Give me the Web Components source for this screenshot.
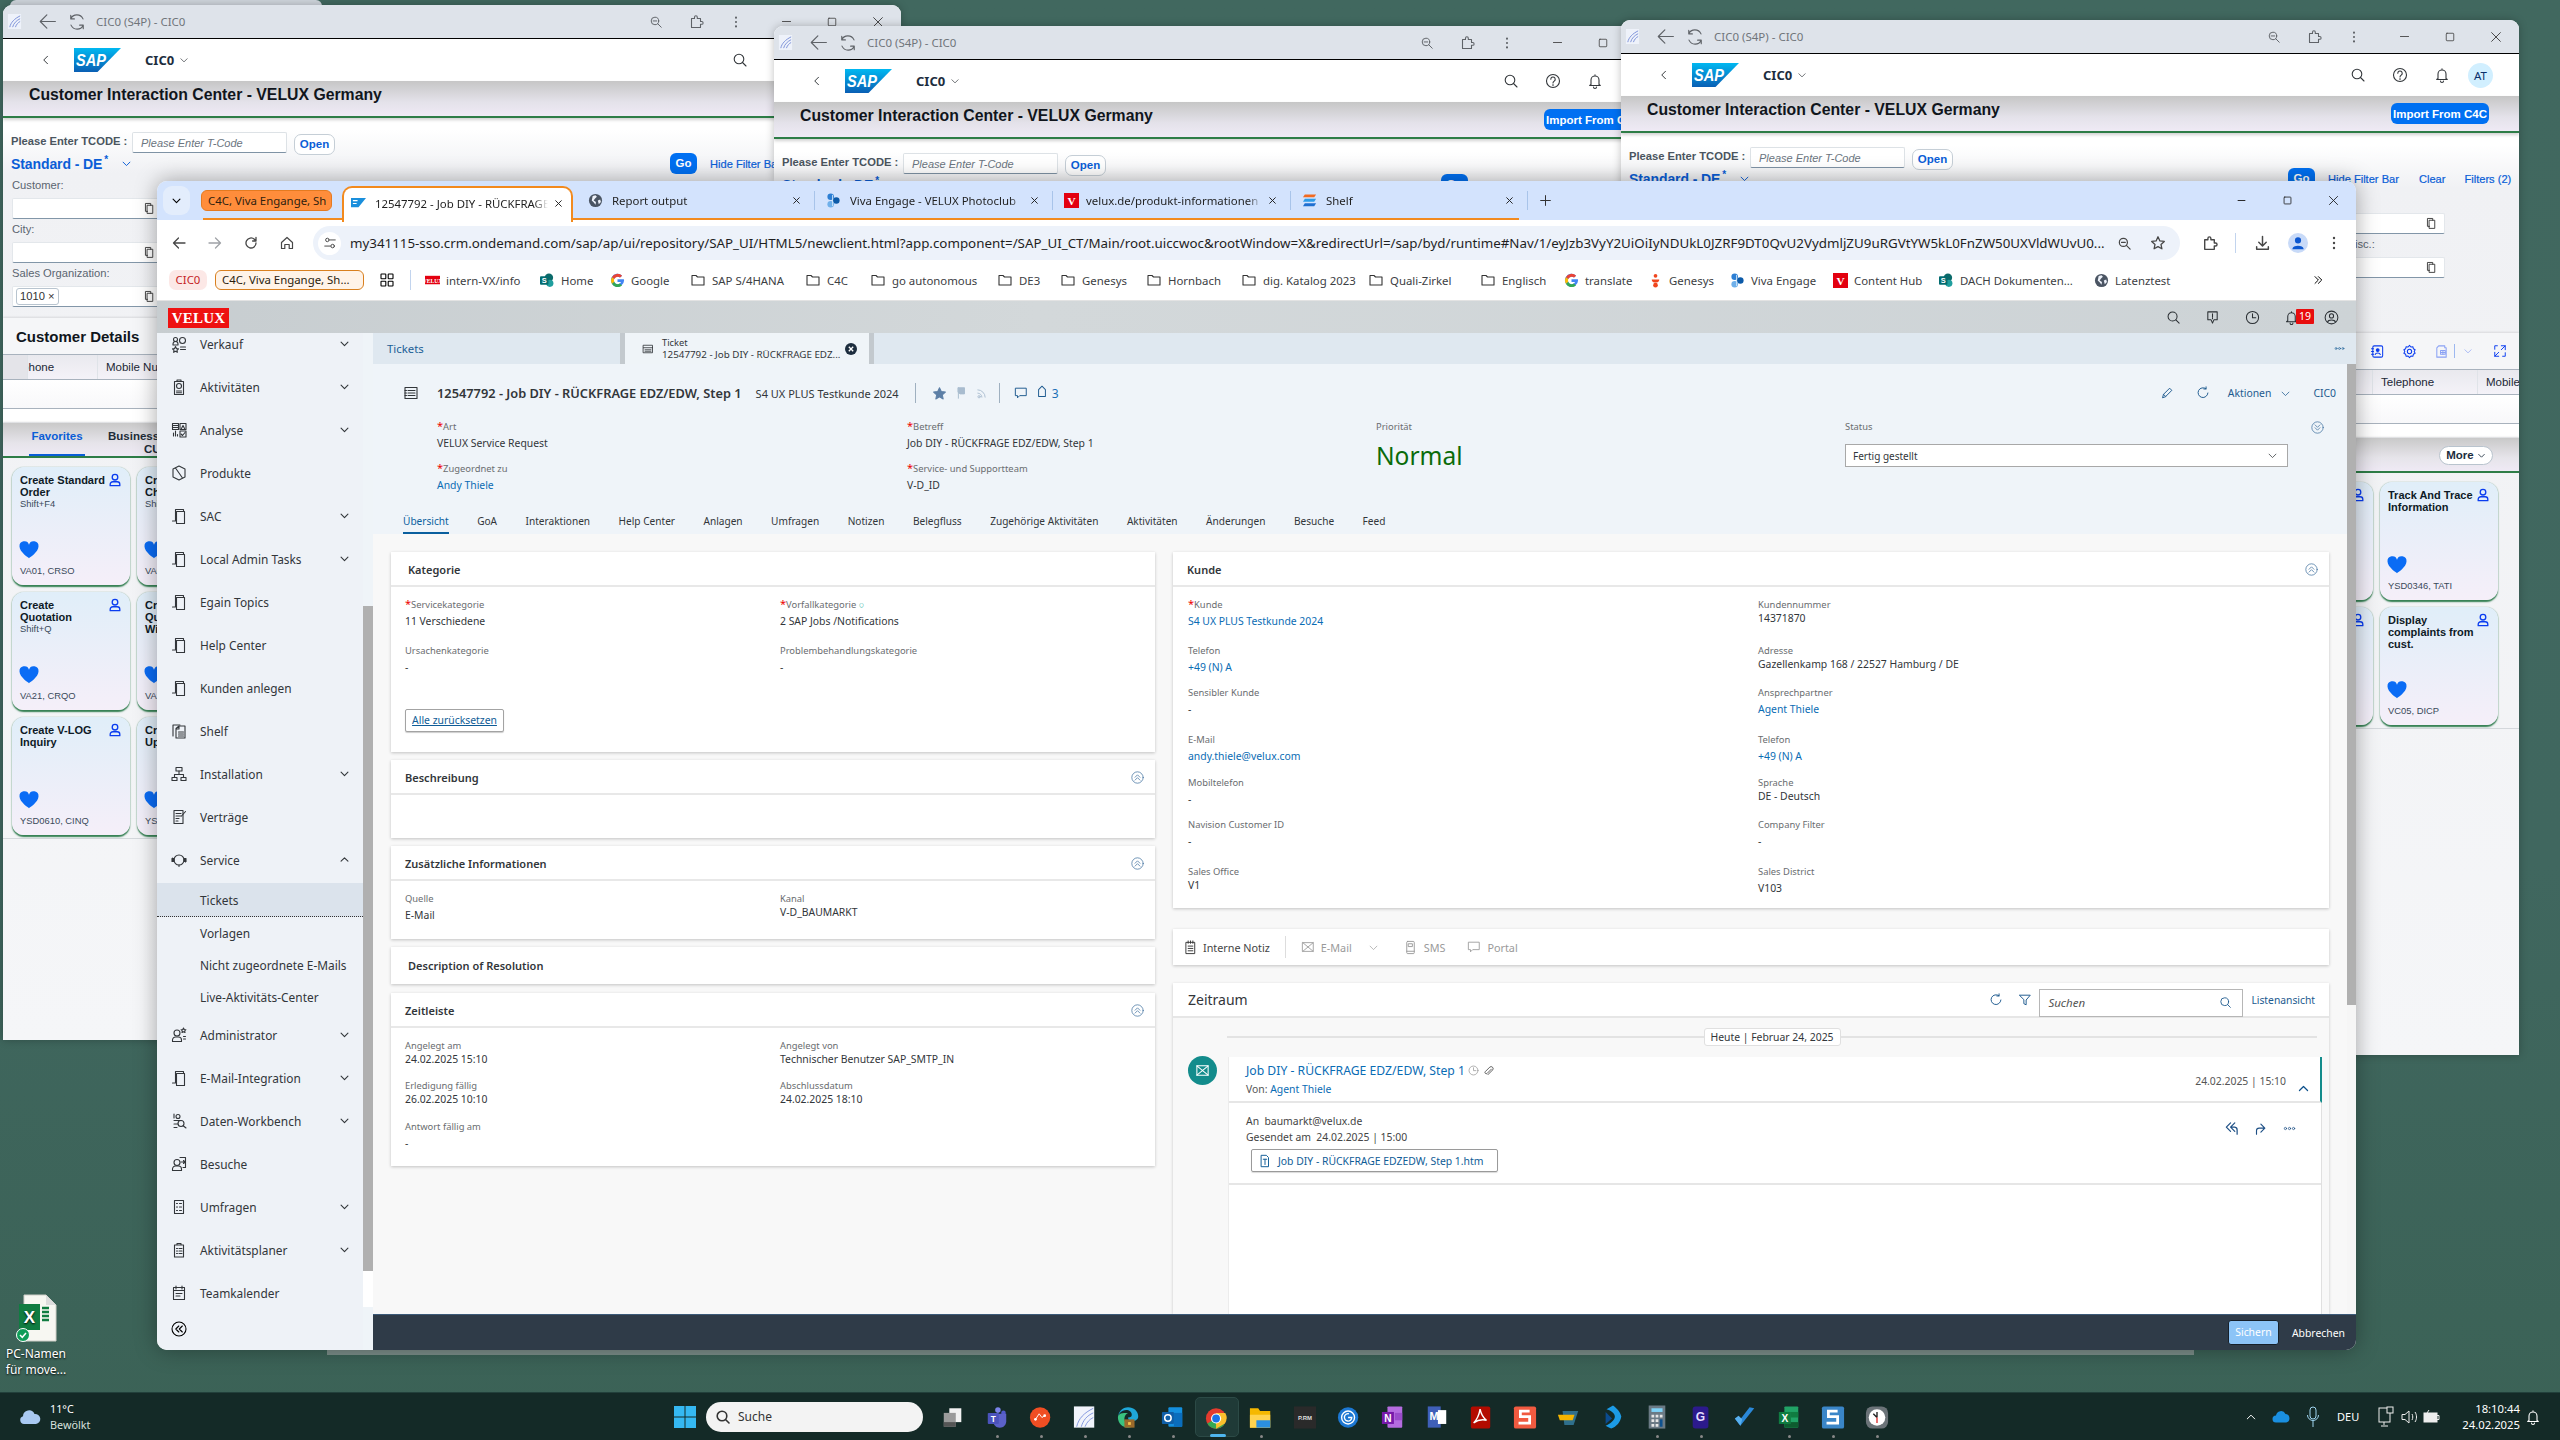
<!DOCTYPE html>
<html lang="de"><head><meta charset="utf-8"><title>CIC0</title>
<style>
html,body{margin:0;padding:0}
body{width:2560px;height:1440px;overflow:hidden;position:relative;background:linear-gradient(180deg,#41685f 0,#40675f 60%,#3b6256 100%);font-family:"Noto Sans",sans-serif}
</style></head><body>
<bg-strip></bg-strip>
<bg-window style="--x:3px;--y:5px" data-tx="-36px" data-k="a"></bg-window>
<bg-window style="--x:774px;--y:26px" data-tx="-36px" data-k="b"></bg-window>
<bg-window style="--x:1621px;--y:20px" data-tx="726px" data-k="c"></bg-window>
<desk-icon></desk-icon>
<under-scroll></under-scroll>
<main-window></main-window>
<task-bar></task-bar>
<script>
const I={
back:'<path d="M14 8H2.5M7.5 3 2.5 8l5 5"/>',
fwd:'<path d="M2 8h11.5M8.5 3l5 5-5 5"/>',
reload:'<path d="M13 8a5 5 0 1 1-1.6-3.7L13 6V2.4M13 6H9.6"/>',
cycle:'<path d="M12.8 5.5A5.4 5.4 0 0 0 3 5.4M3.2 10.5a5.4 5.4 0 0 0 9.8.1M3 2.6v2.9h2.9M13 13.4v-2.9h-2.9"/>',
refr:'<path d="M11.5 3.2A5.6 5.6 0 1 0 13.6 8M11.5 1v2.4H9"/>',
home:'<path d="M2.5 7.5 8 2.5l5.5 5v6h-3.3V9.5H5.8v4H2.5z"/>',
zoom:'<circle cx="6.8" cy="6.8" r="4.3"/><path d="M10 10l4 4M4.8 6.8h4"/>',
search:'<circle cx="7" cy="7" r="4.8"/><path d="M10.5 10.5 14 14"/>',
ext:'<path d="M3.5 4.5h3V3.2a1.4 1.4 0 0 1 2.8 0v1.3h3.2v3h1.2a1.4 1.4 0 0 1 0 2.8h-1.2v3.2h-9z"/>',
dots:'<circle cx="8" cy="3" r="1.2" fill="currentColor" stroke="none"/><circle cx="8" cy="8" r="1.2" fill="currentColor" stroke="none"/><circle cx="8" cy="13" r="1.2" fill="currentColor" stroke="none"/>',
hdots:'<circle cx="3" cy="8" r="1.4"/><circle cx="8" cy="8" r="1.4"/><circle cx="13" cy="8" r="1.4"/>',
min:'<path d="M3 8h10"/>',max:'<rect x="3" y="3" width="10" height="10" rx="1"/>',
x:'<path d="M3 3l10 10M13 3 3 13"/>',
chev:'<path d="M3 6l5 5 5-5"/>',up:'<path d="M3 10.5l5-5 5 5"/>',left:'<path d="M10 3 5 8l5 5"/>',
help:'<circle cx="8" cy="8" r="6.5"/><path d="M5.8 6.2a2.2 2.2 0 1 1 3.4 1.9c-.8.5-1.2 1-1.2 1.9M8 11.6v1"/>',
bell:'<path d="M4 11.5V7a4 4 0 0 1 8 0v4.500l1.300 1H2.700zM6.500 14a1.500 1.500 0 0 0 3 0M8 3V1.800"/>',
vh:'<rect x="5.500" y="4" width="6.500" height="10"/><path d="M5.500 11.500H3V1.800h6.500V4"/>',
book:'<rect x="3" y="2" width="10.500" height="12" rx="1.500"/><circle cx="8.200" cy="6.500" r="1.500" fill="currentColor"/><path d="M5.500 11.200c.7-2 4.800-2 5.500 0M1.600 5h2.200M1.600 8h2.200M1.600 11h2.200"/>',
gear:'<path d="M8 1.500l1.500 1.700 2.200-.3.4 2.200 1.900 1.100L13 8l1 1.800-1.900 1.100-.4 2.200-2.200-.3L8 14.500l-1.500-1.700-2.200.3-.4-2.200L2 9.800 3 8 2 6.200l1.900-1.100.4-2.200 2.200.3z"/><circle cx="8" cy="8" r="2.300"/>',
exportx:'<path d="M5 2h6.500v2H13v10H3V4.200z"/><rect x="7" y="7" width="5" height="4"/><path d="M9.500 7v4M7 9h5"/>',
full:'<path d="M9.500 2H14v4.500M14 2l-4.500 4.500M6.500 14H2V9.500M2 14l4.500-4.500M2 6V2h3M14 10v4h-3"/>',
person:'<circle cx="8" cy="4.800" r="3.200"/><path d="M2.500 14.500v-1.500a3 3 0 0 1 3-3h5a3 3 0 0 1 3 3v1.500z"/>',
heart:'<path fill="currentColor" stroke="none" d="M8 14.500S.4 9.600.4 5.200A3.900 3.900 0 0 1 8 3.700a3.900 3.900 0 0 1 7.600 1.500C15.600 9.600 8 14.500 8 14.500z"/>',
tune:'<circle cx="5" cy="4.500" r="2"/><circle cx="11" cy="11.500" r="2"/><path d="M8.500 4.500H14M2 11.500h6.500"/>',
star:'<path d="M8 1.800l1.900 4.100 4.400.5-3.300 3 .9 4.400L8 11.600l-3.900 2.200.9-4.400-3.300-3 4.400-.5z"/>',
starf:'<path fill="currentColor" d="M8 1.800l1.900 4.100 4.400.5-3.300 3 .9 4.400L8 11.600l-3.900 2.200.9-4.400-3.300-3 4.400-.5z"/>',
dl:'<path d="M8 1.500V10M4.500 6.800 8 10.300l3.500-3.500M2.500 11v2.500h11V11"/>',
grid:'<rect x="2" y="2" width="4.800" height="4.800" rx=".6"/><rect x="9.200" y="2" width="4.800" height="4.800" rx=".6"/><rect x="2" y="9.200" width="4.800" height="4.800" rx=".6"/><rect x="9.200" y="9.200" width="4.800" height="4.800" rx=".6"/>',
folder:'<path d="M2 3.500h4l1.500 1.500H14v8H2z"/>',
dbl:'<path d="M4 3.500l4.500 4.500L4 12.500M8.500 3.500 13 8l-4.500 4.500"/>',
feed:'<path d="M3 2h10v8.500H9.500L8 14l-1.500-3.500H3z"/><path d="M8 4v3.800M8 8.800v.6"/>',
clock:'<circle cx="8" cy="8" r="6.500"/><path d="M8 4v4.200h3.500"/>',
acc:'<circle cx="8" cy="8" r="6.800"/><circle cx="8" cy="6.300" r="2.200"/><path d="M3.800 12.800c.9-2.800 7.500-2.800 8.400 0"/>',
tick:'<rect x="2" y="3" width="12" height="10"/><path d="M2 6.300h12M4 9h8M4 11h8"/>',
tick2:'<rect x="2" y="2.500" width="12" height="11"/><path d="M5 5.500h7M5 8h7M5 10.500h7M2 5.500h1.500M2 8h1.500M2 10.500h1.500"/>',
flag:'<path fill="currentColor" d="M5 2h7v7H7L5 7.500z"/><path d="M5 2v12"/>',
rss:'<circle cx="5" cy="12" r="1.400"/><path d="M3.500 7.500a5 5 0 0 1 5 5M3.500 3.500a9 9 0 0 1 9 9"/>',
chat:'<path d="M2 2.500h12v8.500H6.500L4 13.500V11H2z"/>',
tag:'<path d="M2.500 8 8 2.500h5.500V8L8 13.500z" transform="rotate(-45 8 8)"/>',
pencil:'<path d="M3 13l1-3.500 7-7 2.500 2.500-7 7zM4 9.500 6.500 12"/>',
cd:'<circle cx="8" cy="8" r="7"/><path d="M5 4.800 8 7.800l3-3M5 8.300l3 3 3-3"/>',
cu:'<circle cx="8" cy="8" r="7"/><path d="M5 7.700l3-3 3 3M5 11.200l3-3 3 3"/>',
cl:'<circle cx="8" cy="8" r="7"/><path d="M7.800 5 4.800 8l3 3M11.300 5l-3 3 3 3"/>',
filter:'<path d="M2 2.500h12L9.300 8v5.500l-2.600-1.300V8z"/>',
mailx:'<rect x="2" y="3" width="12" height="10"/><path d="M2 3l12 10M14 3 2 13"/>',
sms:'<rect x="4" y="1.500" width="8" height="13" rx="1"/><path d="M6 4h4v3H6zM4 12h8"/>',
note:'<rect x="3.500" y="2.500" width="9" height="12"/><path d="M5.500 1v2.500M8 1v2.500M10.500 1v2.500M5.500 6.500h5M5.500 9h5M5.500 11.500h5"/>',
replyall:'<path d="M7 2 2.500 6.500 7 11M11.500 2 7 6.500l4.500 4.500M7 6.500h4.500A3 3 0 0 1 14 9.500V14"/>',
fwdm:'<path d="M9 2.500l4.500 4.500L9 11.500M13.500 7H7A3 3 0 0 0 4 10v4"/>',
clip:'<path d="M12.500 5.500 6.800 11.200a1.700 1.700 0 0 1-2.400-2.400l6-6a2.700 2.700 0 0 1 3.800 3.800l-6.300 6.300"/>',
doc:'<path d="M4 1.500h5.500L12 4v10.500H4zM6 6h4M8 6v6"/>',
nv1:'<circle cx="4.500" cy="3.500" r="2"/><path d="M2 9V8a2 2 0 0 1 5 0v1zM4.500 10.500l1 2.200 2 .2-1.500 1.400.4 2-1.900-1-1.900 1 .4-2L1.500 12.900l2-.2z"/><circle cx="11.500" cy="4.500" r="3"/><path d="M9.500 11h5M9.500 13.500h5"/>',
nv2:'<rect x="3.500" y="2.500" width="9" height="13"/><path d="M6 2.500V1h4v1.500"/><circle cx="8" cy="7" r="2.500"/><path d="M5.500 12h5M5.500 13.800h5"/>',
nv3:'<rect x="1.500" y="1.500" width="6" height="6"/><path d="M1.500 3.500h6M1.500 5.500h6"/><rect x="9" y="1.500" width="6" height="6"/><path d="M10 7.500 12 3.500l2 4"/><path d="M2.500 14v-3M4.500 14v-5M6.500 14v-1.500" /><rect x="9" y="9" width="6" height="6" /><path d="M10 12l1.500 1.500L14 10.500"/>',
nv4:'<path d="M8 1l6 3v8l-6 3-6-3V4zM4.500 3l7 10"/>',
nv5:'<path d="M1.500 13h3V1.500h8v2"/><rect x="5.500" y="3.500" width="8" height="12"/>',
shelf:'<path d="M2 13V2h7"/><path d="M5 5.500 8 3h6v12H5zM8 3v3H5M7.500 9h5M7.500 11h5M7.500 13h5"/>',
inst:'<rect x="5" y="1.500" width="6" height="3.500"/><rect x="1" y="11.500" width="5" height="3"/><rect x="10" y="11.500" width="5" height="3"/><path d="M8 5v3.500M3.500 11.500v-3h9v3"/>',
vert:'<path d="M3 1.500h9v13H3zM5 4.500h5M5 7h5M5 9.500h3M5 12h2"/><path d="M14.500 2.500 10.500 7"/>',
serv:'<circle cx="8" cy="8" r="5"/><path d="M3 8H1.500v-2M13 8h1.500v2M8 13v1.500"/><rect x="1" y="6.500" width="2" height="3" fill="currentColor"/><rect x="13" y="6.500" width="2" height="3" fill="currentColor"/>',
admin:'<circle cx="6" cy="6" r="3"/><path d="M1.500 14.500V13a3 3 0 0 1 3-3h3a3 3 0 0 1 3 3v1.500zM12.500 1l.7 1.500 1.700.2-1.200 1.100.3 1.700-1.500-.8-1.500.8.300-1.700-1.200-1.100 1.700-.2zM12.500 9.500h2M12.500 12h2"/>',
data:'<circle cx="7" cy="3.500" r="2"/><path d="M3 1v4M3 7.500h7M3 11h4M3 14.500h3"/><circle cx="10" cy="10.500" r="3"/><path d="M12.200 12.700 15 15"/>',
vis:'<circle cx="6" cy="6.500" r="3"/><path d="M1.500 14.500v-1.500a3 3 0 0 1 3-3h3a3 3 0 0 1 3 3v1.500zM9 1.500h5.500v10H12M10 6h4M12.500 4.500 14 6l-1.500 1.500"/>',
survey:'<rect x="3.500" y="1.500" width="9" height="13"/><path d="M5.500 4.500h1M5.500 8h1M5.500 11.500h1M8.500 4.500h2M8.500 8h2M8.500 11.500h2"/>',
plan:'<path d="M3.500 3h9v12h-9zM6 3V1.500h4V3M5.500 6.500h1M8 6.500h3M5.500 9h1M8 9h3M5.500 11.500h1M8 11.500h3"/>',
cal:'<path d="M2.500 2.500h11v12h-11zM2.500 5.500h11M5 1v3M11 1v3M5 8.500h6M5 11h4"/>',
};
function el(name,css,html){customElements.define(name,class extends HTMLElement{connectedCallback(){if(this.shadowRoot)return;const r=this.attachShadow({mode:'open'});r.innerHTML='<style>'+css+'</style>'+(typeof html==='function'?html(this):html)}})}
const a=(e,k,d='')=>e.getAttribute(k)??d;
el('x-i',':host{display:inline-flex;flex:none;align-items:center;justify-content:center;line-height:0}svg{fill:none;stroke:currentColor;stroke-width:var(--sw,1.100);stroke-linejoin:round;stroke-linecap:round;overflow:visible}',
e=>{const s=a(e,'s','16');return `<svg width="${s}" height="${s}" viewBox="0 0 16 16">${I[a(e,'n')]||''}</svg>`});

/* ---------- logos and favicons ---------- */
el('sap-logo',':host{display:inline-block;line-height:0}',e=>{const w=a(e,'w','47'),h=w*24/47;return `<svg width="${w}" height="${h}" viewBox="0 0 47 24"><defs><linearGradient id="g" x1="0" y1="0" x2="0" y2="1"><stop offset="0" stop-color="#00b8f1"/><stop offset="1" stop-color="#0a5fb4"/></linearGradient></defs><path d="M0 0h47L23.500 24H0z" fill="url(#g)"/><text x="2" y="18" font-family="Liberation Sans" font-weight="700" font-style="italic" font-size="17" fill="#fff" textLength="30" lengthAdjust="spacingAndGlyphs">SAP</text></svg>`});
el('fav-icon',':host{display:inline-flex;flex:none;line-height:0;align-items:center;justify-content:center}',e=>{const s=a(e,'s','15'),n=a(e,'n');const m={
fiori:'<rect x="1" y="0" width="14" height="16" fill="#eef2fa"/><path d="M14 2C8 5 4 9 3 14M14 5C10 7 7 10 6 14M14 8c-2 1-4 3-5 6" fill="none" stroke="#7a8fd8"/>',
sap:'<path d="M0 2h16l-8 10H0z" fill="#1a8fdc"/><path d="M2 5h5M2 8h4" stroke="#fff" stroke-width="1.300"/>',
viva:'<circle cx="5" cy="4" r="3.500" fill="#2d7fd4"/><circle cx="11" cy="8" r="3.500" fill="#0c5aa8"/><circle cx="5" cy="12" r="3.500" fill="#6fb0ea"/><path d="M7 2v12" stroke="#cfe4f8"/>',
velux:'<rect width="16" height="16" fill="#e3000f"/><text x="8" y="12.500" text-anchor="middle" font-family="Liberation Serif" font-weight="700" font-size="12" fill="#fff">V</text>',
shelf:'<path d="M3 1.500h12l-2 3H1z" fill="#f26a21"/><path d="M3 6.200h12l-2 3H1z" fill="#2d9ce8"/><path d="M3 11h12l-2 3H1z" fill="#1f6fd0"/>',
vxred:'<rect y="3" width="16" height="9" fill="#e3000f"/><text x="8" y="10.200" text-anchor="middle" font-family="Liberation Serif" font-weight="700" font-size="6" fill="#fff">VELUX</text>',
sp:'<circle cx="9.500" cy="5" r="4.500" fill="#0b6a6a"/><circle cx="10.500" cy="11" r="3.800" fill="#1f9e9e"/><rect x="0" y="3.500" width="9" height="9" rx="1" fill="#036c70"/><text x="4.500" y="11" text-anchor="middle" font-family="Liberation Sans" font-weight="700" font-size="8" fill="#fff">S</text>',
g:'<path d="M14.700 6.700H8v2.900h3.800A4 4 0 1 1 10.700 4.900l2.200-2.100A7 7 0 1 0 15 8c0-.5 0-.9-.3-1.300z" fill="#4285f4"/><path d="M2 4.600l2.500 1.900A4 4 0 0 1 10.700 4.900l2.200-2.100A7 7 0 0 0 2 4.600z" fill="#ea4335"/><path d="M2 11.400A7 7 0 0 0 12.800 13.200l-2.400-1.900a4 4 0 0 1-5.900-2z" fill="#34a853"/><path d="M1.100 8c0 1.300.3 2.400.9 3.400l2.500-2.100a4 4 0 0 1 0-2.800L2 4.600A7 7 0 0 0 1.100 8z" fill="#fbbc05"/>',
gen:'<circle cx="8" cy="3" r="2" fill="#f0461e"/><path d="M4 7h8a3 3 0 0 1-3 3H7a3 3 0 0 1-3-3z" fill="#f0461e"/><circle cx="8" cy="13" r="2.500" fill="#f0461e"/>',
globe:'<circle cx="8" cy="8" r="7" fill="#4b5563"/><path fill="#eef2fa" d="M5 3.200l3-.8 1.500 1.600-2 1.800L6 8l2.500 1.500-.5 3-1.800-2.500L4 8zM10.500 8l2.500-1 .8 2.500-2.300 2.500z"/>'};
return `<svg width="${s}" height="${s}" viewBox="0 0 16 16">${m[n]||''}</svg>`});

/* ---------- background windows ---------- */
el('bg-strip',':host{position:absolute;left:10px;top:0;width:312px;height:6px;background:#cfd5dc;border-radius:6px 6px 0 0}','');
el('under-scroll',':host{position:absolute;left:327px;top:1345px;width:1867px;height:10px;background:#7c8f8a}','');
el('win-title',`:host{display:flex;align-items:center;height:33px;background:#dee3ea;border-bottom:1px solid #000;color:#5f6368;font-size:12px}
.b{width:40px;display:flex;justify-content:center}.w{width:46px;display:flex;justify-content:center;color:#444}
.t{font:11.500px "Noto Sans";color:#70757a;margin-left:9px;white-space:nowrap}`,
`<fav-icon n="fiori" s="15" style="margin-left:4px"></fav-icon>
<x-i n="back" s="21" style="margin-left:15px;--sw:.9"></x-i><x-i n="cycle" s="20" style="margin-left:9px;--sw:.9"></x-i><span class="t">CIC0 (S4P) - CIC0</span>
<span class="b" style="margin-left:auto"><x-i n="zoom" s="14"></x-i></span><span class="b"><x-i n="ext" s="16"></x-i></span><span class="b"><x-i n="dots" s="14"></x-i></span>
<span class="w" style="margin-left:7px"><x-i n="min" s="13"></x-i></span><span class="w"><x-i n="max" s="12"></x-i></span><span class="w"><x-i n="x" s="14"></x-i></span>`);
el('shell-head',`:host{display:flex;align-items:center;height:42px;background:#fff;color:#32363a;box-sizing:border-box}
b{font:700 13px "Noto Sans";color:#1d2d3e;margin-left:24px}
.ic{display:flex;width:42px;justify-content:center}
.av{width:25px;height:25px;border-radius:50%;background:#d1efff;color:#0a2f6b;font:11.500px "Noto Sans";display:flex;align-items:center;justify-content:center;margin:0 26px 0 5px}`,
`<x-i n="left" s="12" style="margin-left:37px;--sw:1.300"></x-i><sap-logo w="47" style="margin-left:22px"></sap-logo><b>CIC0</b><x-i n="chev" s="10" style="margin-left:5px"></x-i>
<span class="ic" style="margin-left:auto"><x-i n="search" s="16"></x-i></span><span class="ic"><x-i n="help" s="16"></x-i></span><span class="ic"><x-i n="bell" s="16"></x-i></span><span class="av">AT</span>`);
el('page-bar',`:host{display:flex;align-items:flex-start;height:37px;box-sizing:border-box;border-bottom:2px solid #2e7d47;background:linear-gradient(180deg,#c6c6c6,#e4e2ea 60%,#efeaf5);box-shadow:0 2px 3px rgba(0,0,0,.18)}
h1{margin:3px 0 0 26px;font:700 15.800px/21px "Liberation Sans";color:#10151c;white-space:nowrap}
button{margin:7px 30px 0 auto;width:98px;height:21px;background:#0070f2;color:#fff;border:0;border-radius:6px;font:700 11.500px "Liberation Sans";padding:0}`,
e=>`<h1>Customer Interaction Center - VELUX Germany</h1>${a(e,'btn')?'<button>Import From C4C</button>':''}`);
el('tile-card',`:host{display:block;position:relative;box-sizing:border-box;width:118px;height:118px;border-radius:12px;background:linear-gradient(180deg,#e0eef9,#f5eff9);box-shadow:0 0 1px #7fa38f,0 1.500px 1.500px #2f7d4e;padding:7px 8px;font-family:"Liberation Sans"}
.t{font:700 11px/12px "Liberation Sans";color:#0e1a26;padding-right:15px}
.s{font:9.400px/11px "Liberation Sans";color:#3a4a5a}
.p{position:absolute;right:8px;top:6px;color:#0a3cf0;--sw:1.500}
.h{position:absolute;left:7px;top:73px;color:#0a6cf5}
.c{position:absolute;left:8px;top:98px;font:9.400px/12px "Liberation Sans";color:#3a4a5a;white-space:nowrap}`,
e=>a(e,'t')?`<x-i class="p" n="person" s="14"></x-i><div class="t">${a(e,'t')}</div><div class="s">${a(e,'s')}</div><x-i class="h" n="heart" s="20"></x-i><div class="c">${a(e,'c')}</div>`:(e.hasAttribute('ic')?`<x-i class="p" n="person" s="14"></x-i>`:''));
el('bg-field',`:host{display:block;height:44px;font:11.200px/16px "Liberation Sans";color:#5b6570}
.l{height:16px;white-space:nowrap}.i{margin-top:5px;height:21px;box-sizing:border-box;background:#fff;border:1px solid #e3e7eb;border-bottom:1px solid #8296a8;border-radius:2px;display:flex;align-items:center;justify-content:flex-end;padding:0 6px;color:#333;position:relative}
.k{margin-right:auto;margin-left:-3px;border:1px solid #b8c4cf;border-radius:3px;padding:0 3px;font-size:11.200px;line-height:15px}`,
e=>`<div class="l">${a(e,'l')}</div><div class="i">${a(e,'k')?`<span class="k">${a(e,'k')} ×</span>`:''}<x-i n="vh" s="13"></x-i></div>`);
el('bg-window',`:host{display:block;position:absolute;left:var(--x);top:var(--y);width:898px;height:1035px;background:linear-gradient(180deg,#fff 125px,#f0f1f4 168px,#f5f6f8);border-radius:9px 9px 0 0;overflow:hidden;box-shadow:0 0 8px rgba(0,0,0,.25);font-family:"Liberation Sans"}
:host([data-k=b]){height:155px}
.tc{display:flex;align-items:flex-start;margin-top:14px;height:21px;padding-left:8px;font:700 11.200px "Liberation Sans";color:#4a5560}
.tc .lab{width:121px;padding-top:3px;white-space:nowrap}
.tc .in{width:155px;height:21px;box-sizing:border-box;background:#fff;border:1px solid #dde2e6;border-bottom:1px solid #7f93a5;border-radius:2px;font:italic 400 11px/20px "Liberation Sans";color:#6b7580;padding-left:8px}
.tc .op{margin:2px 0 0 7px;width:41px;height:21px;box-sizing:border-box;background:#fff;border:1px solid #c5ced6;border-radius:7px;color:#0a5ed7;font:700 11.500px/19px "Liberation Sans";text-align:center}
.st{display:flex;align-items:center;height:21px;padding-left:8px;color:#0a5ed7;font-size:12px;position:relative}
.st b{font:700 14px "Liberation Sans";letter-spacing:-.1px}.st sup{font:700 10px/1 "Liberation Sans";margin:-8px 0 0 2px}
.go{margin-left:667px;position:absolute;left:0;width:27px;height:21px;border-radius:6px;background:#0070f2;color:#fff;text-align:center;font:700 11.500px/21px "Liberation Sans"}
.acts{margin-left:auto;display:flex;align-items:center;width:191px}
.ln{font:400 11.100px "Liberation Sans";-webkit-text-stroke:.2px #0a5ed7;white-space:nowrap;color:#0a5ed7}
.fg{display:grid;grid-template-columns:repeat(5,151px);column-gap:15px;padding:3px 0 0 9px}
.det{display:flex;align-items:center;height:36px;margin-top:9px;background:#f5f6f8;box-shadow:0 -1px 2px rgba(0,0,0,.1);color:#0a3cf0}
.det h2{margin:0 0 0 13px;font:700 15px "Liberation Sans";color:#10151c;white-space:nowrap}
.thead{height:26px;display:flex;background:linear-gradient(180deg,#e9e9ee,#f4f2f8);border-top:1px solid #a8b2bd;border-bottom:1px solid #a8b2bd;box-sizing:border-box}
.fz{width:25px;flex:none;background:#e4e4e9;border-right:1px solid #dfe3e8;box-sizing:border-box}.sc{flex:1;min-width:0;overflow:hidden;display:flex}
.thead .c{flex:none;width:105px;box-sizing:border-box;border-left:1px solid #dfe3e8;padding-left:8px;font:11.500px/24px "Liberation Sans";color:#1b2735;white-space:nowrap;overflow:hidden}
.row{height:28px;box-sizing:border-box;background:linear-gradient(180deg,#fff,#f8f8fa)}
.sb{height:13px;border-top:1px solid #a8b2bd;background:#fff;position:relative}
.tabs{display:flex;height:35px;box-sizing:border-box;margin-top:1px;background:linear-gradient(180deg,#c9c9c9,#e6e4ea 60%,#efeaf5);border-bottom:2px solid #2e7d47;position:relative;font:700 11.500px/13px "Liberation Sans";color:#222d38;box-shadow:0 -1px 2px rgba(0,0,0,.1)}
.tabs .f{margin:7px 0 0 26px;width:56px;text-align:center;color:#0a5ed7;height:26px;border-bottom:2px solid #0a5ed7;box-sizing:border-box}
.tabs .bc{margin:7px 0 0 23px;width:70px;white-space:nowrap}.bc span{margin-left:36px}
.more{margin:8px 26px 0 auto;width:54px;height:19px;box-sizing:border-box;background:#fff;border:1px solid #b9c4ce;border-radius:10px;font:700 11.500px/17px "Liberation Sans";color:#1d2d3e;display:flex;align-items:center;justify-content:center;gap:3px}
.tiles{display:grid;grid-template-columns:repeat(7,118px);gap:7px;padding:9px 0 0 9px}
.end{border-top:1px solid #d4d8dc;margin-top:3px}`,
e=>{const k=e.dataset.k;
const top=`<win-title></win-title><shell-head></shell-head><page-bar ${k!='a'?'btn="1"':''}></page-bar>
<div class="tc"><span class="lab">Please Enter TCODE :</span><span class="in">Please Enter T-Code</span><span class="op">Open</span></div>
<div class="st"><b>Standard - DE</b><sup>*</sup><x-i n="chev" s="11" style="margin-left:13px;--sw:1.400"></x-i>
 <span class="go">Go</span><div class="acts"><span class="ln">Hide Filter Bar</span>${k=='a'?'':'<span class="ln" style="margin-left:20px">Clear</span><span class="ln" style="margin:0 8px 0 19px">Filters (2)</span>'}</div></div>`;
if(k=='b')return top;
const F=(l,x='')=>`<bg-field l="${l}" ${x}></bg-field>`;
const heads=k=='a'?'<span class="c" style="margin-left:-36px">Telephone</span><span class="c">Mobile Number</span>':'<span class="c" style="margin-left:726px">Telephone</span><span class="c">Mobile Number</span>';
const tiles=k=='a'
?`<tile-card t="Create Standard Order" s="Shift+F4" c="VA01, CRSO"></tile-card><tile-card t="Create<br>Change Order" s="Shift+F5" c="VA02"></tile-card><tile-card t="Create<br>Quotation" s="Shift+Q" c="VA21, CRQO" style="grid-area:2/1"></tile-card><tile-card t="Create<br>Quotation<br>With Ref" c="VA23" style="grid-area:2/2"></tile-card><tile-card t="Create V-LOG Inquiry" c="YSD0610, CINQ" style="grid-area:3/1"></tile-card><tile-card t="Create<br>Update" c="YSD" style="grid-area:3/2"></tile-card>`
:`<tile-card ic style="grid-area:1/6"></tile-card><tile-card t="Track And Trace Information" c="YSD0346, TATI" style="grid-area:1/7"></tile-card><tile-card ic style="grid-area:2/6"></tile-card><tile-card t="Display complaints from cust." c="VC05, DICP" style="grid-area:2/7"></tile-card>`;
return top+`<div class="fg">${k=='a'?F('Customer:'):F('')}${F('')+F('')+F('')+F('')}${k=='a'?F('City:'):F('')}${F('')+F('')+F('')}${k=='c'?F('Customer Misc.:'):F('')}${k=='a'?F('Sales Organization:','k="1010"'):F('')}</div>
<div class="det">${k=='a'?'<h2>Customer Details</h2>':''}<x-i n="book" s="15" style="margin-left:auto"></x-i><x-i n="gear" s="15" style="margin-left:17px"></x-i><x-i n="exportx" s="15" style="margin-left:17px;opacity:.45"></x-i><span style="width:1px;height:14px;background:#9db8f0;margin-left:5px"></span><x-i n="chev" s="10" style="margin-left:8px;opacity:.45"></x-i><x-i n="full" s="14" style="margin:0 12px 0 20px"></x-i></div>
<div class="thead"><span class="fz"></span><div class="sc">${heads}</div></div>
<div class="row"></div><div class="sb"></div>
<div class="tabs">${k=='a'?'<span class="f">Favorites</span><span class="bc">Business<br><span>CU</span></span>':''}<span class="more">More <x-i n="chev" s="9" style="--sw:1.500"></x-i></span></div>
<div class="tiles">${tiles}</div><div class="end"></div>`});

/* ---------- desktop icon ---------- */
el('desk-icon',`:host{position:absolute;left:1px;top:1294px;width:70px;font:12px/16px "Noto Sans";color:#fff;text-shadow:0 1px 2px #000;text-align:center;display:block}`,
`<svg width="50" height="48" viewBox="0 0 50 48"><path d="M13 1h22l10 10v36H13z" fill="#f7f7f2" stroke="#cfcfc8"/><path d="M35 1v10h10" fill="#ddd"/><rect x="8" y="10" width="21" height="26" fill="#107c41"/><text x="18.500" y="29" text-anchor="middle" font-family="Liberation Sans" font-weight="700" font-size="17" fill="#fff">X</text><path d="M31 14h7M31 18h7M31 22h7M31 26h7" stroke="#107c41" stroke-width="2.500"/><circle cx="12" cy="41" r="6.500" fill="#0f9d58" stroke="#fff"/><path d="M9 41l2.300 2.300L15 39" stroke="#fff" fill="none" stroke-width="1.500"/></svg><br>PC-Namen für move...`);

/* ---------- browser chrome ---------- */
el('c-tab',`:host{display:flex;flex:none;align-items:center;height:39px;box-sizing:border-box;width:var(--w);padding-left:var(--pl,15px);position:relative;font:11.400px "Noto Sans";color:#1f1f1f}
.t{flex:1;min-width:0;margin-left:var(--g,9px);overflow:hidden;white-space:nowrap;-webkit-mask-image:linear-gradient(90deg,#000 calc(100% - 14px),transparent);padding-right:2px}
x-i{margin:0 14px 0 6px}.sep{position:absolute;right:0;top:10px;height:19px;width:1px;background:#a8c4ea}`,
e=>`<fav-icon n="${a(e,'ic')}" s="${a(e,'is','15')}"></fav-icon><span class="t">${a(e,'t')}</span><x-i n="x" s="9" style="--sw:1.700"></x-i><span class="sep"></span>`);
el('c-tabs',`:host{display:flex;height:39px;background:#d3e3fd;position:relative;flex:none}
.s{margin:5px 0 0 6px;width:27px;height:29px;border-radius:9px;background:#e3edfc;display:flex;align-items:center;justify-content:center}
.g{margin:9px 0 0 11px;width:131px;height:21px;box-sizing:border-box;background:#ff8d3b;border:1px solid #e57a20;border-radius:6px;font:11.400px/19px "Noto Sans";color:#30210f;padding-left:6px;overflow:hidden;white-space:nowrap}
.a{margin:5px 0 0 10px;width:231px;height:36px;box-sizing:border-box;background:#fff;border:2px solid #f28a1e;border-bottom:0;border-radius:10px 10px 0 0;display:flex;align-items:center;padding:0 8px 3px 7px;font:11.400px "Noto Sans";color:#1f1f1f;z-index:2}
.a .t{flex:1;min-width:0;margin-left:9px;overflow:hidden;white-space:nowrap;-webkit-mask-image:linear-gradient(90deg,#000 calc(100% - 14px),transparent)}
.l1,.l2{position:absolute;bottom:0;height:2px;background:#f28a1e}.l1{left:46px;width:140px}.l2{left:416px;width:946px}
.p{margin-left:12px;display:flex;align-items:center;color:#333}
.w{width:46px;display:flex;justify-content:center;align-items:center;color:#222}`,
`<span class="s"><x-i n="chev" s="11" style="--sw:1.600"></x-i></span><span class="g">C4C, Viva Engange, Sh</span>
<span class="a"><fav-icon n="sap" s="15"></fav-icon><span class="t">12547792 - Job DIY - RÜCKFRAGE</span><x-i n="x" s="9" style="margin-left:6px;--sw:1.700"></x-i></span>
<c-tab t="Report output" ic="globe" style="--w:242px;--pl:15px"></c-tab><c-tab t="Viva Engage - VELUX Photoclub" ic="viva" style="--w:238px;--pl:11px"></c-tab><c-tab t="velux.de/produkt-informationen" ic="velux" style="--w:238px;--pl:11px;--g:7px"></c-tab><c-tab t="Shelf" ic="shelf" style="--w:237px;--pl:11px"></c-tab>
<span class="p"><x-i n="x" s="11" style="transform:rotate(45deg);--sw:1.500"></x-i></span>
<span class="w" style="margin-left:auto"><x-i n="min" s="11" style="--sw:1.400"></x-i></span><span class="w"><x-i n="max" s="11" style="--sw:1.200"></x-i></span><span class="w"><x-i n="x" s="13"></x-i></span>
<span class="l1"></span><span class="l2"></span>`);
el('c-toolbar',`:host{display:flex;align-items:flex-start;height:40px;background:#fff;color:#474747;flex:none}
.n{width:36px;height:34px;margin-top:6px;display:flex;align-items:center;justify-content:center}
.addr{margin:6px 0 0 8px;width:1867px;height:34px;border-radius:17px;background:#edf2fa;display:flex;align-items:center;box-sizing:border-box;padding:0 6px 0 5px}
.tn{width:23px;height:23px;border-radius:50%;background:#fff;display:flex;align-items:center;justify-content:center;margin-right:9px;flex:none}
.u{width:1754px;flex:none;white-space:nowrap;font:13.350px "Noto Sans";color:#1f1f1f}
.pf{width:20px;height:20px;border-radius:50%;background:#c8daf8;display:flex;align-items:center;justify-content:center;color:#0b57d0;--sw:0}
.e{margin-top:6px;height:34px;display:flex;align-items:center;justify-content:center;width:36px}`,
`<span class="n" style="margin-left:4px"><x-i n="back" s="16" style="--sw:1.300"></x-i></span><span class="n" style="color:#a0a3a8"><x-i n="fwd" s="16" style="--sw:1.300"></x-i></span><span class="n"><x-i n="reload" s="16" style="--sw:1.300"></x-i></span><span class="n"><x-i n="home" s="16" style="--sw:1.200"></x-i></span>
<div class="addr"><span class="tn"><x-i n="tune" s="14"></x-i></span><span class="u">my341115-sso.crm.ondemand.com/sap/ap/ui/repository/SAP_UI/HTML5/newclient.html?app.component=/SAP_UI_CT/Main/root.uiccwoc&amp;rootWindow=X&amp;redirectUrl=/sap/byd/runtime#Nav/1/eyJzb3VyY2UiOiIyNDUkL0JZRF9DT0QvU2VydmljZU9uRGVtYW5kL0FnZW50UXVldWUvU0...</span><x-i n="zoom" s="15" style="margin-left:13px;--sw:1.300"></x-i><x-i n="star" s="16" style="margin-left:18px;--sw:1.300"></x-i></div>
<span class="e" style="margin-left:11px"><x-i n="ext" s="17" style="--sw:1.300"></x-i></span><span style="width:1px;height:20px;background:#c2d4ee;margin:13px 8px 0 8px"></span><span class="e"><x-i n="dl" s="17" style="--sw:1.400"></x-i></span><span class="e"><span class="pf"><svg width="14" height="14" viewBox="0 0 16 16" fill="#0b57d0"><circle cx="8" cy="5" r="3.500"/><path d="M1.500 15c.5-5 12.500-5 13 0z"/></svg></span></span><span class="e"><x-i n="dots" s="16"></x-i></span>`);
el('c-bm',`:host{display:flex;flex:none;align-items:center;width:var(--w);font:11.400px "Noto Sans";color:#3c4043;white-space:nowrap}
x-i,fav-icon{margin-right:var(--g,6px)}`,
e=>(a(e,'f')?`<fav-icon n="${a(e,'f')}" s="15"></fav-icon>`:`<x-i n="folder" s="16" style="--sw:1.100;color:#333"></x-i>`)+`<span>${a(e,'t')}</span>`);
el('c-bookmarks',`:host{display:flex;align-items:center;height:40px;background:#fff;flex:none;box-sizing:border-box}
.c1{margin-left:12px;width:38px;height:20px;border-radius:7px;background:#fce8e6;color:#c5221f;font:11.400px/20px "Noto Sans";text-align:center}
.c2{margin-left:8px;width:149px;height:20px;box-sizing:border-box;border:1px solid #d9801f;border-radius:6px;background:#fff3e8;color:#2b1d0e;font:11.400px/18px "Noto Sans";padding-left:6px;white-space:nowrap;overflow:hidden}`,
`<span class="c1">CIC0</span><span class="c2">C4C, Viva Engange, Sh...</span><x-i n="grid" s="16" style="margin-left:15px"></x-i><span style="width:1px;height:20px;background:#c2d4ee;margin:0 14px 0 15px"></span>
<c-bm f="vxred" t="intern-VX/info" style="--w:115px"></c-bm><c-bm f="sp" t="Home" style="--w:70px"></c-bm><c-bm f="g" t="Google" style="--w:80px"></c-bm><c-bm t="SAP S/4HANA" style="--w:115px"></c-bm><c-bm t="C4C" style="--w:65px"></c-bm><c-bm t="go autonomous" style="--w:127px"></c-bm><c-bm t="DE3" style="--w:63px"></c-bm><c-bm t="Genesys" style="--w:86px"></c-bm><c-bm t="Hornbach" style="--w:95px"></c-bm><c-bm t="dig. Katalog 2023" style="--w:127px"></c-bm><c-bm t="Quali-Zirkel" style="--w:112px"></c-bm><c-bm t="Englisch" style="--w:84px"></c-bm><c-bm f="g" t="translate" style="--w:84px"></c-bm><c-bm f="gen" t="Genesys" style="--w:82px"></c-bm><c-bm f="viva" t="Viva Engage" style="--w:103px"></c-bm><c-bm f="velux" t="Content Hub" style="--w:106px"></c-bm><c-bm f="sp" t="DACH Dokumenten..." style="--w:155px"></c-bm><c-bm f="globe" t="Latenztest" style="--w:218px"></c-bm><x-i n="dbl" s="12" style="--sw:1.300"></x-i>`);
el('app-head',`:host{display:flex;align-items:center;height:33px;flex:none;background:linear-gradient(100deg,#c7cdd0,#d3d8da 40%,#cdd3d6);color:#2a2f33;position:relative;border-top:1px solid #e3e3e3;box-sizing:border-box}
.logo{margin:1px 0 0 11px;width:61px;height:20px;background:#ee1111;color:#fff;font:700 15px/20px "Liberation Serif";text-align:center;letter-spacing:.2px}
.ic{width:39.500px;display:flex;justify-content:center;position:relative}
.bd{position:absolute;left:24px;top:-1px;width:18px;height:15px;background:#e80d0d;color:#fff;font:10.500px/15px "Noto Sans";text-align:center;border-radius:1px}`,
`<span class="logo">VELUX</span><span class="ic" style="margin-left:auto"><x-i n="search" s="15"></x-i></span><span class="ic"><x-i n="feed" s="15"></x-i></span><span class="ic"><x-i n="clock" s="15"></x-i></span><span class="ic"><x-i n="bell" s="15"></x-i><span class="bd">19</span></span><span class="ic" style="margin-right:5px"><x-i n="acc" s="15"></x-i></span>`);

/* ---------- SAP side navigation ---------- */
el('nav-item',`:host{display:flex;align-items:center;height:43px;padding-left:14px;font:11.900px "Noto Sans";color:#32363a;box-sizing:border-box;--sw:1.100}
.t{margin-left:13px;white-space:nowrap}.c{margin-left:auto;margin-right:13px;--sw:1.600}`,
e=>`<x-i n="${a(e,'i')}" s="16"></x-i><span class="t">${a(e,'t')}</span>${a(e,'c')?`<x-i class="c" n="${a(e,'c')}" s="11"></x-i>`:''}`);
el('nav-sub',`:host{display:flex;align-items:center;height:32px;padding-left:43px;font:11.900px "Noto Sans";color:#32363a;white-space:nowrap;box-sizing:border-box}
:host([on]){height:34px;background:#dbe3ec;border-bottom:1px dotted #333;margin-top:2px}`,e=>a(e,'t'));
el('side-nav',`:host{display:flex;flex:none;width:216px;background:#eef2f7;overflow:hidden}
.list{width:206px;flex:none;overflow:hidden}.in{margin-top:-11px}
.tr{width:10px;flex:none;display:flex;flex-direction:column;background:#eff4f8}.th{margin-top:273px;height:665px;background:#b0b0b0;flex:none}.wh{height:36px;background:#fff;flex:none}`,
`<div class="list"><div class="in">
<nav-item i="nv1" t="Verkauf" c="chev"></nav-item><nav-item i="nv2" t="Aktivitäten" c="chev"></nav-item><nav-item i="nv3" t="Analyse" c="chev"></nav-item><nav-item i="nv4" t="Produkte"></nav-item><nav-item i="nv5" t="SAC" c="chev"></nav-item><nav-item i="nv5" t="Local Admin Tasks" c="chev"></nav-item><nav-item i="nv5" t="Egain Topics"></nav-item><nav-item i="nv5" t="Help Center"></nav-item><nav-item i="nv5" t="Kunden anlegen"></nav-item><nav-item i="shelf" t="Shelf"></nav-item><nav-item i="inst" t="Installation" c="chev"></nav-item><nav-item i="vert" t="Verträge"></nav-item><nav-item i="serv" t="Service" c="up"></nav-item>
<nav-sub on t="Tickets"></nav-sub><nav-sub t="Vorlagen"></nav-sub><nav-sub t="Nicht zugeordnete E-Mails"></nav-sub><nav-sub t="Live-Aktivitäts-Center"></nav-sub>
<nav-item i="admin" t="Administrator" c="chev"></nav-item><nav-item i="nv5" t="E-Mail-Integration" c="chev"></nav-item><nav-item i="data" t="Daten-Workbench" c="chev"></nav-item><nav-item i="vis" t="Besuche"></nav-item><nav-item i="survey" t="Umfragen" c="chev"></nav-item><nav-item i="plan" t="Aktivitätsplaner" c="chev"></nav-item><nav-item i="cal" t="Teamkalender"></nav-item>
<x-i n="cl" s="16" style="margin:7px 0 0 14px"></x-i></div></div><div class="tr"><div class="th"></div><div class="wh"></div></div>`);

/* ---------- SAP content ---------- */
el('x-f',`:host{display:block;font-family:"Noto Sans"}
.l{font-size:9.400px;line-height:12px;color:#6a6d70;white-space:nowrap}.l i{color:#e00;font-style:normal;font-size:11px;line-height:10px}
.v{font-size:10.400px;line-height:var(--vl,20px);color:#32363a;white-space:nowrap}.k{color:#0a6cb4}`,
e=>`<div class="l">${e.hasAttribute('r')?'<i>*</i>':''}${a(e,'l')}${a(e,'ex')}</div><div class="v ${e.hasAttribute('k')?'k':''}" ${e.hasAttribute('tight')?'style="--vl:14px"':''}>${a(e,'v')}</div>`);
el('x-card',`:host{display:block;flex:none;background:#fff;box-shadow:0 1px 3px rgba(0,0,0,.22);overflow:hidden}
.h{display:flex;align-items:center;height:35px;box-sizing:border-box;border-bottom:2px solid #e8e8e8;padding:1px 11px 0 var(--hp,14px);font:600 11px "Noto Sans";color:#32363a}
:host([flat]) .h{border:0}.h x-i{margin-left:auto;color:#3e6f9e;--sw:.9}`,
e=>`<div class="h"><span>${a(e,'t')}</span>${a(e,'c')?`<x-i n="cu" s="13"></x-i>`:''}</div><slot></slot>`);
el('ticket-head',`:host{display:flex;flex-direction:column;height:170px;flex:none;background:#eff4f9;box-sizing:border-box;font-family:"Noto Sans";color:#32363a}
.tr{display:flex;align-items:center;height:26px;margin-top:16px;padding-left:30px}
.tr b{font:600 12.800px "Noto Sans";margin-left:18px;white-space:nowrap}.sub{font-size:11px;margin-left:14px;white-space:nowrap}
.sep{width:1px;height:20px;background:#9fb0c0;margin:0 16px}.blue{color:#5d7fa6}
.act{margin-left:auto;display:flex;align-items:center;color:#1d5a8f;font-size:10.400px;margin-right:11px}
.fg{display:grid;grid-template-columns:470px 469px 469px 443px auto;grid-template-rows:42px 42px;margin:15px 0 0 64px}
.nm{font-size:24.500px;line-height:38px;color:#0a6b0a;margin-top:4px;font-weight:400}
.sel{margin-top:11px;height:23px;box-sizing:border-box;background:#fff;border:1px solid #a8a8a8;display:flex;align-items:center;padding:0 9px 0 7px;font-size:10px}
.lb{font-size:9.400px;line-height:12px;color:#6a6d70}
.tabs{margin-top:auto;display:flex;gap:28.500px;padding-left:30px;font-size:10.100px;height:26px;box-sizing:border-box}
.tabs span{display:block;padding-top:1px;line-height:25px;height:26px;box-sizing:border-box;white-space:nowrap}.tabs .on{color:#0a5f9e;border-bottom:2px solid #0a5f9e}`,
`<div class="tr"><x-i n="tick2" s="16"></x-i><b>12547792 - Job DIY - RÜCKFRAGE EDZ/EDW, Step 1</b><span class="sub">S4 UX PLUS Testkunde 2024</span><span class="sep"></span><x-i class="blue" n="starf" s="15"></x-i><x-i n="flag" s="14" style="margin-left:7px;color:#a9bccf"></x-i><x-i n="rss" s="13" style="margin-left:7px;color:#a9bccf"></x-i><span class="sep" style="margin-left:11px"></span><x-i n="chat" s="14" style="margin-left:-2px;color:#1d5a8f"></x-i><x-i n="tag" s="14" style="margin-left:7px;color:#1d5a8f"></x-i><span style="margin-left:3px;color:#1b6fb5;font-size:12px">3</span>
<span class="act"><x-i n="pencil" s="14"></x-i><x-i n="refr" s="14" style="margin-left:22px"></x-i><span style="margin-left:18px">Aktionen</span><x-i n="chev" s="11" style="margin-left:9px"></x-i><span style="margin-left:22px">CIC0</span></span></div>
<div class="fg"><x-f r l="Art" v="VELUX Service Request" style="grid-area:1/1"></x-f><x-f r l="Betreff" v="Job DIY - RÜCKFRAGE EDZ/EDW, Step 1" style="grid-area:1/2"></x-f><div style="grid-area:1/3/3/4"><div class="lb">Priorität</div><div class="nm">Normal</div></div><div style="grid-area:1/4/3/5"><div class="lb">Status</div><div class="sel">Fertig gestellt<x-i n="chev" s="11" style="margin-left:auto"></x-i></div></div><x-i n="cd" s="13" style="grid-area:1/5;align-self:start;justify-self:start;margin-left:23px;color:#3e6f9e;--sw:.9"></x-i>
<x-f r l="Zugeordnet zu" v="Andy Thiele" k style="grid-area:2/1"></x-f><x-f r l="Service- und Supportteam" v="V-D_ID" style="grid-area:2/2"></x-f></div>
<div class="tabs"><span class="on">Übersicht</span><span>GoA</span><span>Interaktionen</span><span>Help Center</span><span>Anlagen</span><span>Umfragen</span><span>Notizen</span><span>Belegfluss</span><span>Zugehörige Aktivitäten</span><span>Aktivitäten</span><span>Änderungen</span><span>Besuche</span><span>Feed</span></div>`);
el('time-line',`:host{display:flex;flex-direction:column;flex:1;background:#f8f8f8;box-shadow:0 1px 3px rgba(0,0,0,.2);font-family:"Noto Sans";color:#32363a;min-height:0;overflow:hidden}
.h{display:flex;align-items:center;height:35px;flex:none;box-sizing:border-box;background:#fff;border-bottom:2px solid #e6e6e6;padding-left:15px;font-size:14px}
.s{width:204px;height:28px;box-sizing:border-box;border:1px solid #b6b6b6;display:flex;align-items:center;padding:0 10px 0 8px;font:italic 11.500px "Noto Sans";color:#555;margin:6px 0 0 7px;background:#fff}
.lk{font-size:10.300px;color:#1d5a8f;margin:0 14px 0 8px;white-space:nowrap}
.d{position:relative;height:18px;margin:10px 12px 0 54px;flex:none;display:flex;justify-content:center}
.d:before{content:"";position:absolute;left:0;right:0;top:8px;height:2px;background:#e3e3e3}
.d span{position:relative;width:137px;text-align:center;background:#fff;border:1px solid #e0e0e0;border-radius:3px;font-size:10.400px;line-height:17px;box-sizing:border-box}
.b{display:flex;flex:1;min-height:0;margin-top:11px;padding:0 7px 0 15px}
.ava{width:29px;height:29px;border-radius:50%;background:#138c8c;flex:none;margin-top:-1px;display:flex;align-items:center;justify-content:center;color:#fff}
.it{flex:1;margin-left:11px;background:#fff;border-right:1px solid #e0e0e0;display:flex;flex-direction:column;border-left:1px solid #ececec}
.top{position:relative;height:46px;box-sizing:border-box;border-bottom:2px solid #e6e6e6;border-right:2px solid #138c8c;margin-right:-1px;padding:4px 0 0 17px;display:flex;flex:none}
.tt{font-size:12.200px;line-height:19px;color:#0a6cb4;white-space:nowrap;display:flex;align-items:center}
.vn{font-size:10.400px;line-height:18px;white-space:nowrap;color:#555}
.dt{margin-left:auto;font-size:10.400px;color:#555;margin-top:13px;white-space:nowrap}
.ex{height:82px;box-sizing:border-box;flex:none;border-bottom:2px solid #e6e6e6;padding:10px 0 0 17px;font-size:10.400px;line-height:16px;display:flex;align-items:flex-start;color:#444}
.att{margin:4px 0 0 5px;width:247px;height:23px;box-sizing:border-box;border:1px solid #9a9a9a;border-radius:2px;display:flex;align-items:center;padding-left:6px;color:#0f5c96;font-size:10.400px;white-space:nowrap;box-shadow:0 1px 1px rgba(0,0,0,.15)}
.r{margin:8px 25px 0 auto;display:flex;align-items:center;color:#1d4f85;--sw:1.300}`,
`<div class="h">Zeitraum<x-i n="refr" s="14" style="margin-left:auto;color:#1d5a8f"></x-i><x-i n="filter" s="14" style="margin-left:15px;color:#1d5a8f"></x-i><span class="s">Suchen<x-i n="search" s="13" style="margin-left:auto;color:#1d5a8f"></x-i></span><span class="lk">Listenansicht</span></div>
<div class="d"><span>Heute | Februar 24, 2025</span></div>
<div class="b"><span class="ava"><x-i n="mailx" s="15"></x-i></span><div class="it">
<div class="top"><div><div class="tt">Job DIY - RÜCKFRAGE EDZ/EDW, Step 1<x-i n="clock" s="11" style="margin-left:3px;color:#999"></x-i><x-i n="clip" s="12" style="margin-left:3px;color:#444"></x-i></div><div class="vn">Von: <span style="color:#0a6cb4">Agent Thiele</span></div></div><span class="dt">24.02.2025 | 15:10</span><x-i n="up" s="13" style="margin:15px 10px 0 11px;color:#0b4f8a;--sw:1.500"></x-i></div>
<div class="ex"><div><div>An&nbsp; baumarkt@velux.de</div><div>Gesendet am&nbsp; 24.02.2025 | 15:00</div><div class="att"><x-i n="doc" s="14" style="margin-right:6px"></x-i>Job DIY - RÜCKFRAGE EDZEDW, Step 1.htm</div></div><div class="r"><x-i n="replyall" s="15"></x-i><x-i n="fwdm" s="14" style="margin-left:14px"></x-i><x-i n="hdots" s="13" style="margin-left:16px;--sw:.9"></x-i></div></div>
</div></div>`);
el('note-bar',`:host{display:flex;align-items:center;height:36px;flex:none;background:#fff;box-shadow:0 1px 3px rgba(0,0,0,.22);font:10.800px "Noto Sans";color:#9a9a9a;padding-left:10px;--sw:1;white-space:nowrap;margin:21px 0 18px}`,
`<x-i n="note" s="15" style="color:#333"></x-i><span style="color:#444;margin-left:5px">Interne Notiz</span><span style="width:1px;height:22px;background:#ddd;margin:0 15px"></span><x-i n="mailx" s="14"></x-i><span style="margin-left:6px">E-Mail</span><x-i n="chev" s="11" style="margin-left:16px"></x-i><x-i n="sms" s="15" style="margin-left:24px"></x-i><span style="margin-left:6px">SMS</span><x-i n="chat" s="14" style="margin-left:22px"></x-i><span style="margin-left:6px">Portal</span>`);
el('ticket-body',`:host{display:flex;flex:1;min-height:0;background:#f8f8f8;padding:18px 18px 0;box-sizing:border-box;gap:18px;overflow:hidden}
.c1{width:764px;flex:none;display:flex;flex-direction:column;gap:8px}.c2{flex:1;display:flex;flex-direction:column;min-width:0}
.g{display:grid;grid-template-columns:375px 1fr;padding:12px 0 0 14px}
.ks{display:grid;grid-template-columns:570px 1fr;grid-template-rows:46px 42px 47px 43px 42px 47px 30px;padding:12px 0 0 15px}
.btn{display:inline-block;margin:18px 0 0 14px;height:23px;width:99px;box-sizing:border-box;border:1px solid #a3a3a3;border-radius:2px;font:10.400px/21px "Noto Sans";color:#0f5c96;text-align:center;text-decoration:underline;background:#fff;box-shadow:0 1px 1px rgba(0,0,0,.2)}`,
`<div class="c1">
<x-card t="Kategorie" style="height:200px;--hp:17px"><div class="g" style="grid-template-rows:46px 46px"><x-f r l="Servicekategorie" v="11 Verschiedene"></x-f><x-f r l="Vorfallkategorie" ex=' <span style="color:#2bb5a0">○</span>' v="2 SAP Jobs /Notifications"></x-f><x-f l="Ursachenkategorie" v="-"></x-f><x-f l="Problembehandlungskategorie" v="-"></x-f></div><span class="btn">Alle zurücksetzen</span></x-card>
<x-card t="Beschreibung" c="1" style="height:78px"></x-card>
<x-card t="Zusätzliche Informationen" c="1" style="height:93px"><div class="g"><x-f l="Quelle" v="E-Mail"></x-f><x-f l="Kanal" v="V-D_BAUMARKT" tight></x-f></div></x-card>
<x-card t="Description of Resolution" flat style="height:37px;--hp:17px"></x-card>
<x-card t="Zeitleiste" c="1" style="height:173px;margin-top:1px"><div class="g" style="padding-top:12px;grid-template-rows:40px 41px 40px"><x-f l="Angelegt am" v="24.02.2025 15:10" tight></x-f><x-f l="Angelegt von" v="Technischer Benutzer SAP_SMTP_IN" tight></x-f><x-f l="Erledigung fällig" v="26.02.2025 10:10" tight></x-f><x-f l="Abschlussdatum" v="24.02.2025 18:10" tight></x-f><x-f l="Antwort fällig am" v="-"></x-f></div></x-card>
</div><div class="c2">
<x-card t="Kunde" c="1" style="height:356px"><div class="ks"><x-f r l="Kunde" v="S4 UX PLUS Testkunde 2024" k></x-f><x-f l="Kundennummer" v="14371870" tight></x-f><x-f l="Telefon" v="+49 (N) A" k></x-f><x-f l="Adresse" v="Gazellenkamp 168 / 22527 Hamburg / DE" tight></x-f><x-f l="Sensibler Kunde" v="-"></x-f><x-f l="Ansprechpartner" v="Agent Thiele" k></x-f><x-f l="E-Mail" v="andy.thiele@velux.com" k></x-f><x-f l="Telefon" v="+49 (N) A" k></x-f><x-f l="Mobiltelefon" v="-"></x-f><x-f l="Sprache" v="DE - Deutsch" tight></x-f><x-f l="Navision Customer ID" v="-"></x-f><x-f l="Company Filter" v="-"></x-f><x-f l="Sales Office" v="V1" tight></x-f><x-f l="Sales District" v="V103"></x-f></div></x-card>
<note-bar></note-bar><time-line></time-line></div>`);
el('main-window',`:host{display:flex;flex-direction:column;position:absolute;left:157px;top:181px;width:2199px;height:1169px;border-radius:10px;overflow:hidden;background:#fff;box-shadow:0 0 22px rgba(0,0,0,.35)}
.body{display:flex;flex:1;min-height:0}.m{flex:1;min-width:0;display:flex;flex-direction:column}
.tb{display:flex;align-items:center;height:31px;flex:none;background:#dfe8f0;font:11.400px "Noto Sans";color:#1b5f96}
.t1{padding-left:14px;line-height:31px;box-sizing:border-box;border-right:5px solid #c3c9ce;width:252px;align-self:stretch}
.t2{background:#eff4f8;border-right:5px solid #c3c9ce;display:flex;align-items:center;position:relative;color:#32363a;width:249px;box-sizing:border-box;align-self:stretch}
.t2 small{display:block;font-size:9.300px;line-height:12px;white-space:nowrap}.t2 div{margin-left:8px}
.row{display:flex;flex:1;min-height:0}.col{flex:1;min-width:0;display:flex;flex-direction:column}
.vs{width:9px;flex:none;background:#f6f6f6;display:flex;flex-direction:column}.vs i{height:641px;background:#b0b0b0;display:block}
.ft{height:36px;flex:none;background:#2f3b48;border-top:1px solid #3c5a78;box-sizing:border-box;display:flex;align-items:center;justify-content:flex-end;font:10.400px "Noto Sans";color:#fff;padding-right:11px}
.sv{width:51px;height:25px;background:#8cc4f7;border:1px solid #16202a;border-radius:3px;text-align:center;line-height:23px;box-sizing:border-box;margin-right:13px}`,
`<c-tabs></c-tabs><c-toolbar></c-toolbar><c-bookmarks></c-bookmarks><app-head></app-head>
<div class="body"><side-nav></side-nav><div class="m">
<div class="tb"><span class="t1">Tickets</span><span class="t2"><x-i n="tick" s="12" style="margin-left:17px"></x-i><div><small>Ticket</small><small style="font-size:9.800px">12547792 - Job DIY - RÜCKFRAGE EDZ...</small></div><svg width="12" height="12" viewBox="0 0 12 12" style="margin-left:auto;margin-right:12px"><circle cx="6" cy="6" r="6" fill="#1d2d3e"/><path d="M3.800 3.800l4.400 4.400M8.200 3.800 3.800 8.200" stroke="#fff" stroke-width="1.300"/></svg></span><x-i n="hdots" s="11" style="margin:0 11px 0 auto;--sw:.9"></x-i></div>
<div class="row"><div class="col"><ticket-head></ticket-head><ticket-body></ticket-body></div><div class="vs"><i></i></div></div>
<div class="ft"><span class="sv">Sichern</span><span>Abbrechen</span></div>
</div></div>`);

/* ---------- Windows taskbar ---------- */
const T=[
['<rect x="9" y="3" width="13" height="15" fill="#f2f2f2"/><rect x="3" y="8" width="13" height="15" fill="#9b9b9b"/><rect x="3" y="18" width="13" height="5" fill="#555"/>',0],
['<circle cx="14" cy="5" r="3" fill="#7b83eb"/><circle cx="20" cy="8" r="2.500" fill="#5059c9"/><path d="M9 9h14v8c0 4-3 7-7 7s-7-3-7-7z" fill="#5b61c9"/><rect x="3" y="8" width="12" height="12" rx="1" fill="#4b53bc"/><text x="9" y="17.500" text-anchor="middle" font-family="Liberation Sans" font-weight="700" font-size="9" fill="#fff">T</text>',1],
['<circle cx="12" cy="13" r="11" fill="#f04e23"/><path d="M7 15l4-6 3 4 3-2" stroke="#fff" fill="none"/><circle cx="7" cy="15" r="1.500" fill="#fff"/><circle cx="17" cy="11" r="1.500" fill="#fff"/>',1],
['<rect x="1" y="1" width="22" height="23" fill="#f1f4fb"/><path d="M22 3C12 8 6 14 4 23M22 8c-7 3-11 8-13 15M22 13c-4 2-7 5-9 10" fill="none" stroke="#7d93dd"/>',1],
['<path d="M12 2c6 0 11 4 11 10 0 3-3 5-6 5-4 0-5-2-5-4 3 0 4-1 4-3 0-3-3-5-6-5-5 0-9 4-9 9 0-7 5-12 11-12z" fill="#1fa7d8"/><path d="M1 13c0 6 5 11 11 11 3 0 5-1 7-3-5 2-11-1-11-7 0-3 2-5 4-6-6 0-11 0-11 5z" fill="#3ac27f"/><rect x="8" y="15" width="11" height="9" fill="#9a6a2b"/><rect x="12" y="18" width="3" height="3" fill="#f2c14b"/>',1],
['<rect x="8" y="2" width="15" height="21" rx="1" fill="#1490df"/><rect x="14" y="8" width="9" height="15" fill="#0a6dbd"/><rect x="1" y="7" width="13" height="13" rx="1" fill="#0f5fa8"/><circle cx="7.500" cy="13.500" r="3.500" fill="none" stroke="#fff" stroke-width="1.600"/>',1],
['<circle cx="12" cy="13" r="11" fill="#e33b2e"/><path d="M12 13 2.500 18.500A11 11 0 0 0 12 24z" fill="#35a853"/><path d="M12 13l9.500 5.500A11 11 0 0 1 12 24z" fill="#35a853"/><path d="M12 7h10a11 11 0 0 1-.5 11.500L12 24z" fill="#fbc02d"/><circle cx="12" cy="13" r="5.500" fill="#fff"/><circle cx="12" cy="13" r="4.200" fill="#1a73e8"/>',1],
['<path d="M1 3h9l2 3h11v18H1z" fill="#f5b800"/><path d="M1 10h22v14H1z" fill="#ffd34f"/><rect x="8" y="16" width="15" height="8" fill="#2b8fe0"/>',1],
['<rect x="1" y="1" width="24" height="24" fill="#2a2a2a"/><text x="13" y="16" text-anchor="middle" font-family="Liberation Sans" font-size="6.500" font-weight="700" fill="#ddd">P.RM</text>',0],
['<circle cx="12" cy="13" r="11" fill="#1c77d2"/><circle cx="12" cy="13" r="7" fill="none" stroke="#fff" stroke-width="1.500"/><path d="M13 9a4 4 0 1 0 3 4h-4" fill="none" stroke="#fff" stroke-width="1.500"/>',0],
['<rect x="7" y="1" width="16" height="23" rx="1" fill="#b56ce0"/><rect x="15" y="8" width="8" height="8" fill="#9a4bcb"/><rect x="1" y="7" width="13" height="13" fill="#7719aa"/><text x="7.500" y="17.500" text-anchor="middle" font-family="Liberation Sans" font-weight="700" font-size="11" fill="#fff">N</text>',0],
['<rect x="3" y="1" width="14" height="23" fill="#3f5fb8"/><rect x="14" y="5" width="9" height="15" fill="#fff"/><text x="10" y="16" text-anchor="middle" font-family="Liberation Sans" font-weight="700" font-size="12" fill="#fff">M</text>',0],
['<rect x="2" y="1" width="21" height="24" rx="2" fill="#b30b00"/><path d="M12 4c-1 6-3 11-7 15 4-3 10-4 14-3-4-3-6-7-7-12z" fill="none" stroke="#fff" stroke-width="1.500"/>',0],
['<rect x="1" y="1" width="24" height="24" rx="2" fill="#f15a40"/><path d="M18 6H8v6h10v7H6" fill="none" stroke="#fff" stroke-width="3"/>',0],
['<path d="M6 6h17l-5 15H8z" fill="#2f6f8c"/><path d="M1 10h18l-2 6H3z" fill="#f4b400"/>',0],
['<path d="M13 0c4 3 8 7 9 12-1 6-5 11-11 13-2-1-4-2-6-3 5-2 10-6 10-10C15 8 10 5 6 4z" fill="#1c9be6"/><path d="M5 7v13l7-6z" fill="#0b4b8f"/>',0],
['<rect x="4" y="0" width="18" height="25" fill="#6b7a85"/><rect x="7" y="3" width="12" height="4" fill="#7fd3f7"/><path d="M7 10h3v3H7zM11.500 10h3v3h-3zM16 10h3v3h-3zM7 15h3v3H7zM11.500 15h3v3h-3zM7 20h3v3H7zM11.500 20h3v3h-3z" fill="#e6e6e6"/><rect x="16" y="15" width="3" height="8" fill="#10528f"/>',1],
['<rect x="4" y="1" width="17" height="24" rx="3" fill="#2c1a8c"/><text x="12.500" y="17" text-anchor="middle" font-family="Liberation Sans" font-weight="700" font-size="13" fill="#e4dcff">G</text>',1],
['<path d="M2 14l6 8L23 3l-5-1L8 15z" fill="#2b88d8"/><path d="M2 14l4-3 4 4-2 7z" fill="#58b0f0"/>',0],
['<rect x="8" y="1" width="15" height="23" rx="1" fill="#21a366"/><rect x="15" y="7" width="8" height="6" fill="#107c41"/><rect x="8" y="18" width="15" height="6" fill="#0e5c2f"/><rect x="2" y="7" width="13" height="13" fill="#107c41"/><text x="8.500" y="17.500" text-anchor="middle" font-family="Liberation Sans" font-weight="700" font-size="11" fill="#fff">X</text>',1],
['<rect x="1" y="1" width="24" height="24" rx="2" fill="#3a86c8"/><path d="M18 6H8v6h10v7H6" fill="none" stroke="#fff" stroke-width="3"/>',1],
['<rect x="1" y="1" width="24" height="24" rx="7" fill="#6b7378"/><circle cx="13" cy="13" r="9" fill="#fff"/><path d="M13 13V7M13 13l-4-4" stroke="#222" stroke-width="1.500"/><path d="M13 13v6" stroke="#d33" stroke-width="1.500"/>',1]];
el('task-bar',`:host{display:flex;align-items:center;position:absolute;left:0;right:0;bottom:0;height:48px;background:#142a27;border-top:1px solid #22403b;box-sizing:border-box;color:#fff;font:11.400px "Noto Sans"}
.we{display:flex;align-items:center;margin-left:19px;width:654px;flex:none;line-height:16px;font-size:10.800px}
.se{width:217px;height:30px;background:#f3f3f3;border-radius:15px;display:flex;align-items:center;color:#333;margin-left:9px;flex:none;font-size:12px;box-sizing:border-box;padding-left:9px;--sw:1.600}
.ap{display:flex;margin-left:8px;flex:none}.i{width:44px;height:40px;display:flex;justify-content:center;position:relative;padding-top:8px;box-sizing:border-box}
.i.d:after{content:"";position:absolute;left:20.500px;bottom:-1px;width:3px;height:3px;border-radius:50%;background:#888}
.on{background:#1f3a37;border-radius:5px;border:1px solid #2c4a46;box-sizing:border-box}.on.d:after{left:14px;width:16px;height:3px;border-radius:2px;background:#4fb6ef}
.tr{margin-left:auto;display:flex;align-items:center;gap:0}`,
`<div class="we"><svg width="22" height="17" viewBox="0 0 22 17"><path d="M5 16a4 4 0 0 1-1-7.800A6 6 0 0 1 15.500 6 5 5 0 0 1 17 16z" fill="#a9c9f2"/></svg><div style="margin-left:9px"><div>11°C</div><div style="color:#d8e0de">Bewölkt</div></div></div>
<svg width="24" height="24" viewBox="0 0 24 24"><path d="M1 1h10.500v10.500H1zM12.500 1H23v10.500H12.500zM1 12.500h10.500V23H1zM12.500 12.500H23V23H12.500z" fill="#35b8f2"/></svg>
<div class="se"><x-i n="search" s="16"></x-i><span style="margin-left:7px">Suche</span></div>
<div class="ap">${T.map((t,i)=>`<span class="i ${t[1]?'d':''} ${i==6?'on d':''}"><svg width="24" height="25" viewBox="0 0 26 26">${t[0]}</svg></span>`).join('')}</div>
<div class="tr"><x-i n="up" s="12" style="--sw:1.300"></x-i>
<svg width="18" height="13" viewBox="0 0 18 13" style="margin-left:15px"><path d="M4 12.500a3.500 3.500 0 0 1 0-7 5 5 0 0 1 9.500-1.500A4.300 4.300 0 0 1 14 12.500z" fill="#1a8fe0"/></svg>
<svg width="14" height="22" viewBox="0 0 14 22" style="margin-left:16px" fill="none" stroke="#9fd4ef"><rect x="4" y="1" width="6" height="12" rx="3"/><path d="M1.500 9a5.500 5.500 0 0 0 11 0M7 14.500V21"/></svg>
<span style="margin-left:17px;width:40px;font-size:11px;text-align:left">DEU</span>
<svg width="18" height="22" viewBox="0 0 18 22" fill="none" stroke="#eee"><rect x="2" y="2" width="11" height="14"/><rect x="10" y="1" width="6" height="6" fill="#142a27"/><path d="M7 16v3M4 20h7"/></svg>
<svg width="18" height="16" viewBox="0 0 18 16" style="margin-left:5px" fill="none" stroke="#eee"><path d="M2 5.500h3l4-3.500v12l-4-3.500H2zM12 5c1 1.500 1 4.500 0 6M15 3c2 3 2 7 0 10"/></svg>
<svg width="18" height="16" viewBox="0 0 18 16" style="margin-left:4px" fill="none" stroke="#eee"><rect x="2" y="4" width="13" height="9" fill="#eee"/><path d="M15 6.500h2v4h-2M7 1l-2 3"/></svg>
<div style="width:60px;margin-left:20px;text-align:right;line-height:16px;font-size:11.300px"><div>18:10:44</div><div>24.02.2025</div></div>
<x-i n="bell" s="16" style="margin:0 19px 0 5px"></x-i></div>`);
</script>
</body></html>
